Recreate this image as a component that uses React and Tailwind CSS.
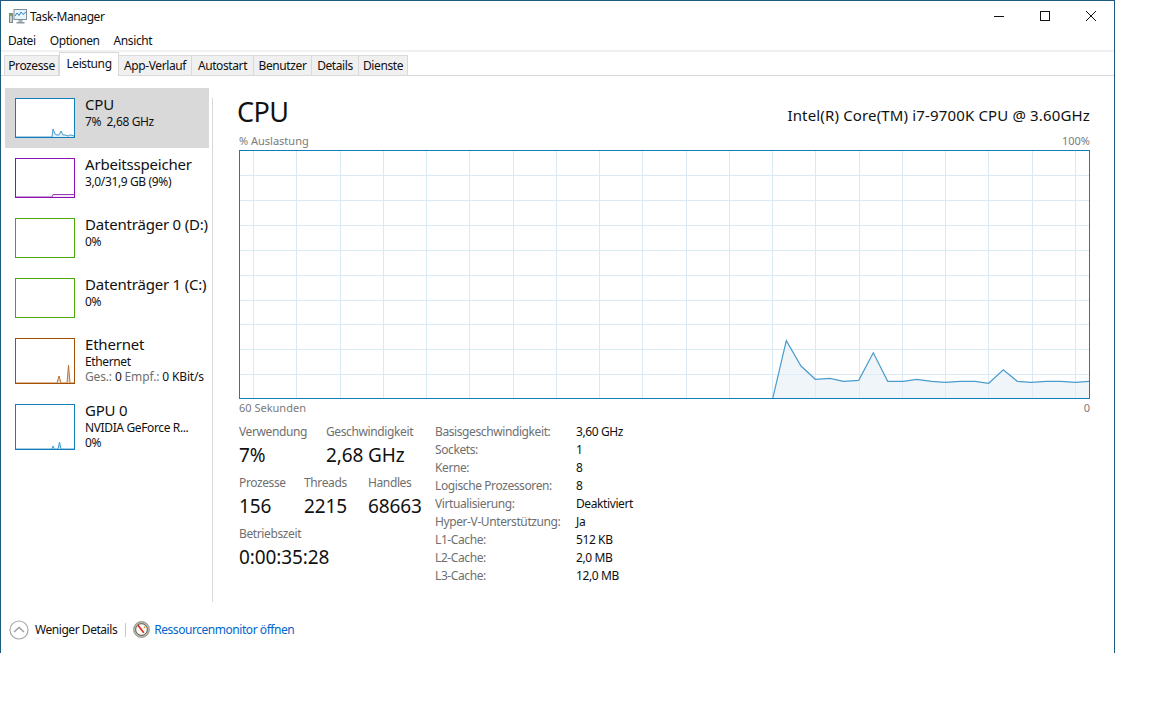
import React from "react";

const font = { fontFamily: '"Noto Sans", sans-serif' };

function AppIcon() {
  return (
    <svg width="18" height="16" viewBox="0 0 18 16" className="block">
      <rect x="0.5" y="4.5" width="3" height="9" fill="#c9ced1" stroke="#7f8a90" />
      <rect x="1" y="5" width="2" height="2" fill="#6fae4a" />
      <rect x="5" y="0.5" width="12.5" height="10" fill="#e8f4fb" stroke="#7d8f9b" />
      <polyline points="6,7 8,4 10,6.5 12,3 14,5.5 17,3" fill="none" stroke="#2f86c4" strokeWidth="1" />
      <rect x="9.5" y="11" width="4" height="2" fill="#a9b2b7" />
      <rect x="7.5" y="13" width="8" height="1.5" fill="#8d979d" />
    </svg>
  );
}

function CollapseIcon() {
  return (
    <svg width="20" height="20" viewBox="0 0 20 20" className="block">
      <circle cx="10" cy="10" r="9" fill="#fff" stroke="#a8a8a8" strokeWidth="1.2" />
      <polyline points="5,12 10,7.5 15,12" fill="none" stroke="#a0a0a0" strokeWidth="1.5" />
    </svg>
  );
}

function ResmonIcon() {
  return (
    <svg width="17" height="17" viewBox="0 0 17 17" className="block">
      <circle cx="8.5" cy="8.5" r="8" fill="#b9b7ac" stroke="#85847b" strokeWidth="0.7" />
      <circle cx="8.5" cy="8.5" r="5.8" fill="#fbfaf5" stroke="#4f4f49" strokeWidth="0.9" />
      <line x1="5" y1="4.3" x2="10.8" y2="11.8" stroke="#d8261c" strokeWidth="1.6" />
      <line x1="12" y1="5" x2="11" y2="7.5" stroke="#e8862a" strokeWidth="1" />
    </svg>
  );
}

function Spark({ w = 58, h, points, stroke, fill }) {
  return (
    <svg width={w} height={h} viewBox={`0 0 ${w} ${h}`} className="block">
      <polygon points={`${points} ${w},${h} 0,${h}`} fill={fill} />
      <polyline points={points} fill="none" stroke={stroke} strokeWidth="1" />
    </svg>
  );
}

function SideRow({ selected, height, name, children, thumb }) {
  return (
    <div className={`flex pl-[10px] pt-[10px] ${height} ${selected ? "bg-[#d9d9d9]" : ""}`}>
      {thumb}
      <div className="ml-[10px] min-w-0 whitespace-nowrap">
        <div className="text-[15px] leading-[14px] mt-[-2px] text-[#111] tracking-[-0.2px] h-[19px] pt-[1px]">{name}</div>
        <div className="text-[12px] leading-[16px] mt-[-1px] text-[#111] tracking-[-0.37px]">{children}</div>
      </div>
    </div>
  );
}

const tabs = [
  ["Prozesse", "w-[55px]"],
  ["Leistung", "w-[60px]"],
  ["App-Verlauf", "w-[73px]"],
  ["Autostart", "w-[62px]"],
  ["Benutzer", "w-[58px]"],
  ["Details", "w-[47px]"],
  ["Dienste", "w-[49px]"],
];

const vLines = Array.from({ length: 20 }, (_, i) => Math.round(253 + i * 43.25) + 0.5);
const hLines = Array.from({ length: 9 }, (_, i) => Math.round(175 + i * 24.9) + 0.5);
const line =
  "772.7,398.5 786.3,340.7 801,366 815.3,379.3 830,378.3 843.3,381.3 858.7,380.3 873.3,352.7 887.7,381.3 903.3,381.3 916.7,379.3 931.7,381.3 945.3,382.3 960,381.3 975,381.3 988.7,383.3 1003.3,369.7 1017.3,381.3 1031.3,382.3 1046,381.3 1060.7,381.3 1075.3,382.3 1089.5,381.3";

function Chart() {
  return (
    <div className="w-[851px] h-[249px] border border-[#117dbb] bg-white">
      <svg width="849" height="247" viewBox="240 151 849 247" className="block">
        {hLines.map((y) => (
          <line key={y} x1="240" x2="1089" y1={y} y2={y} stroke="#d9eaf4" />
        ))}
        {vLines.map((x) => (
          <line key={x} x1={x} x2={x} y1="151" y2="398" stroke="#d9eaf4" />
        ))}
        <polygon points={`${line} 1089.5,398.5`} fill="#e3edf5" fillOpacity="0.55" />
        <polyline points={line} fill="none" stroke="#4a9ccd" strokeWidth="1.2" />
      </svg>
    </div>
  );
}

function Stat({ label, value, width }) {
  return (
    <div className={`${width} shrink-0 whitespace-nowrap`}>
      <div className="text-[12px] leading-[16px] text-[#6f6f6f] tracking-[-0.38px]">{label}</div>
      <div className="text-[19px] leading-[26px] mt-[2px] text-[#111] tracking-[-0.12px]">{value}</div>
    </div>
  );
}

const specs = [
  ["Basisgeschwindigkeit:", "3,60 GHz"],
  ["Sockets:", "1"],
  ["Kerne:", "8"],
  ["Logische Prozessoren:", "8"],
  ["Virtualisierung:", "Deaktiviert"],
  ["Hyper-V-Unterstützung:", "Ja"],
  ["L1-Cache:", "512 KB"],
  ["L2-Cache:", "2,0 MB"],
  ["L3-Cache:", "12,0 MB"],
];

export default function App() {
  return (
    <div style={font} className="w-[1152px] h-[720px] bg-white overflow-hidden">
      <div className="w-[1115px] h-[653px] border border-b-0 border-[#1d5a7e] bg-white flex flex-col">
        {/* title bar */}
        <div className="h-[30px] flex items-center shrink-0">
          <div className="ml-[8px] mt-[1px]"><AppIcon /></div>
          <span className="ml-[3px] mt-[1px] text-[12px] text-[#111] tracking-[-0.4px]">Task-Manager</span>
          <div className="ml-auto flex items-center h-full">
            <div className="w-[46px] flex justify-center">
              <div className="w-[10px] h-px bg-[#111]" />
            </div>
            <div className="w-[46px] flex justify-center">
              <div className="w-[10px] h-[10px] border border-[#111]" />
            </div>
            <div className="w-[46px] flex justify-center">
              <svg width="10" height="10" viewBox="0 0 10 10" className="block">
                <path d="M0 0 L10 10 M10 0 L0 10" stroke="#111" strokeWidth="1" />
              </svg>
            </div>
          </div>
        </div>
        {/* menu */}
        <div className="h-[19px] flex items-center pl-[7px] gap-[14px] text-[12px] text-[#111] tracking-[-0.4px] shrink-0">
          <span>Datei</span>
          <span>Optionen</span>
          <span>Ansicht</span>
        </div>
        <div className="h-[2px] bg-[#f0f0f0] shrink-0" />
        {/* tabs */}
        <div className="h-[24px] flex items-end border-b border-[#d9d9d9] pl-[3px] shrink-0 text-[12px] text-[#111] tracking-[-0.4px]">
          {tabs.map(([t, w]) =>
            t === "Leistung" ? (
              <div key={t} className={`${w} h-[24px] mb-[-1px] relative bg-white border border-b-0 border-[#d9d9d9] flex items-start justify-center pt-[3px] leading-[16px]`}>
                {t}
              </div>
            ) : (
              <div key={t} className={`${w} h-[20px] bg-[#f0f0f0] border-t border-r border-[#d9d9d9] first:border-l flex items-center justify-center leading-[16px]`}>
                {t}
              </div>
            )
          )}
        </div>
        {/* body */}
        <div className="flex flex-1 min-h-0">
          <div className="w-[204px] ml-[4px] mt-[12px] shrink-0">
            <SideRow selected height="h-[60px]" name="CPU"
              thumb={<div className="w-[60px] h-[40px] shrink-0 bg-white border border-[#117dbb]"><Spark h={38} stroke="#4a9ccd" fill="#e3edf5"
                points="0,38 36,38 37,30 39,35 41,36 43,36 45,32 47,36 49,36 52,37 54,36 55,36 58,37" /></div>}>
              7%&nbsp; 2,68 GHz
            </SideRow>
            <SideRow height="h-[60px]" name="Arbeitsspeicher"
              thumb={<div className="w-[60px] h-[40px] shrink-0 bg-white border border-[#8b12ae]"><Spark h={38} stroke="#9a3cb8" fill="#f3e9f6"
                points="0,38 36,38 37,35.5 58,35.5" /></div>}>
              3,0/31,9 GB (9%)
            </SideRow>
            <SideRow height="h-[60px]" name="Datenträger 0 (D:)"
              thumb={<div className="w-[60px] h-[40px] shrink-0 bg-white border border-[#4da60c]" />}>
              0%
            </SideRow>
            <SideRow height="h-[60px]" name="Datenträger 1 (C:)"
              thumb={<div className="w-[60px] h-[40px] shrink-0 bg-white border border-[#4da60c]" />}>
              0%
            </SideRow>
            <SideRow height="h-[66px]" name="Ethernet"
              thumb={<div className="w-[60px] h-[46px] shrink-0 bg-white border border-[#a74f01]"><Spark h={44} stroke="#b9743a" fill="#eed9c6"
                points="0,44 41,44 43,37 45,44 51,44 52.5,26 54,44 58,44" /></div>}>
              Ethernet
              <div className="whitespace-nowrap mt-[-1px] tracking-[-0.15px]"><span className="text-[#6f6f6f]">Ges.:</span> 0 <span className="text-[#6f6f6f]">Empf.:</span> 0 KBit/s</div>
            </SideRow>
            <SideRow height="h-[66px]" name="GPU 0"
              thumb={<div className="w-[60px] h-[46px] shrink-0 bg-white border border-[#117dbb]"><Spark h={44} stroke="#4a9ccd" fill="#cfe2ef"
                points="0,44 36,44 37,41 38.5,44 42,44 43.5,37 45,44 58,44" /></div>}>
              NVIDIA GeForce R...
              <div className="mt-[-1px]">0%</div>
            </SideRow>
          </div>
          <div className="w-px h-[504px] mt-[22px] ml-[3px] bg-[#d9d9d9] shrink-0" />
          <div className="ml-[26px] w-[851px] shrink-0">
            <div className="h-[57px] flex items-start justify-between">
              <span className="text-[27px] leading-[36px] mt-[18px] text-[#111] ml-[-2px] tracking-[-0.6px]">CPU</span>
              <span className="text-[15px] leading-[20px] mt-[29px] text-[#111] tracking-[0.15px]">Intel(R) Core(TM) i7-9700K CPU @ 3.60GHz</span>
            </div>
            <div className="h-[17px] flex justify-between text-[11px] leading-[16px] text-[#7a7a7a]">
              <span>% Auslastung</span>
              <span>100%</span>
            </div>
            <Chart />
            <div className="h-[18px] flex justify-between items-center text-[11px] text-[#7a7a7a]">
              <span>60 Sekunden</span>
              <span>0</span>
            </div>
            <div className="flex mt-[7px]">
              <div className="w-[196px] shrink-0">
                <div className="flex h-[51px]">
                  <Stat label="Verwendung" value="7%" width="w-[87px]" />
                  <Stat label="Geschwindigkeit" value="2,68 GHz" width="w-[109px]" />
                </div>
                <div className="flex h-[51px]">
                  <Stat label="Prozesse" value="156" width="w-[65px]" />
                  <Stat label="Threads" value="2215" width="w-[64px]" />
                  <Stat label="Handles" value="68663" width="w-[67px]" />
                </div>
                <Stat label="Betriebszeit" value="0:00:35:28" width="w-[120px]" />
              </div>
              <div className="text-[12px] tracking-[-0.4px] mt-[-1px]">
                {specs.map(([k, v]) => (
                  <div key={k} className="flex h-[18px] items-center whitespace-nowrap">
                    <span className="w-[141px] text-[#6f6f6f]">{k}</span>
                    <span className="text-[#111]">{v}</span>
                  </div>
                ))}
              </div>
            </div>
          </div>
        </div>
        {/* footer */}
        <div className="h-[43px] flex items-center shrink-0 text-[12px] tracking-[-0.45px] pl-[8px] pb-[4px]">
          <CollapseIcon />
          <span className="ml-[6px] text-[#111]">Weniger Details</span>
          <div className="w-px h-[14px] bg-[#c8c8c8] ml-[8px]" />
          <div className="ml-[7px]"><ResmonIcon /></div>
          <span className="ml-[4px] text-[#0066cc]">Ressourcenmonitor öffnen</span>
        </div>
      </div>
    </div>
  );
}
